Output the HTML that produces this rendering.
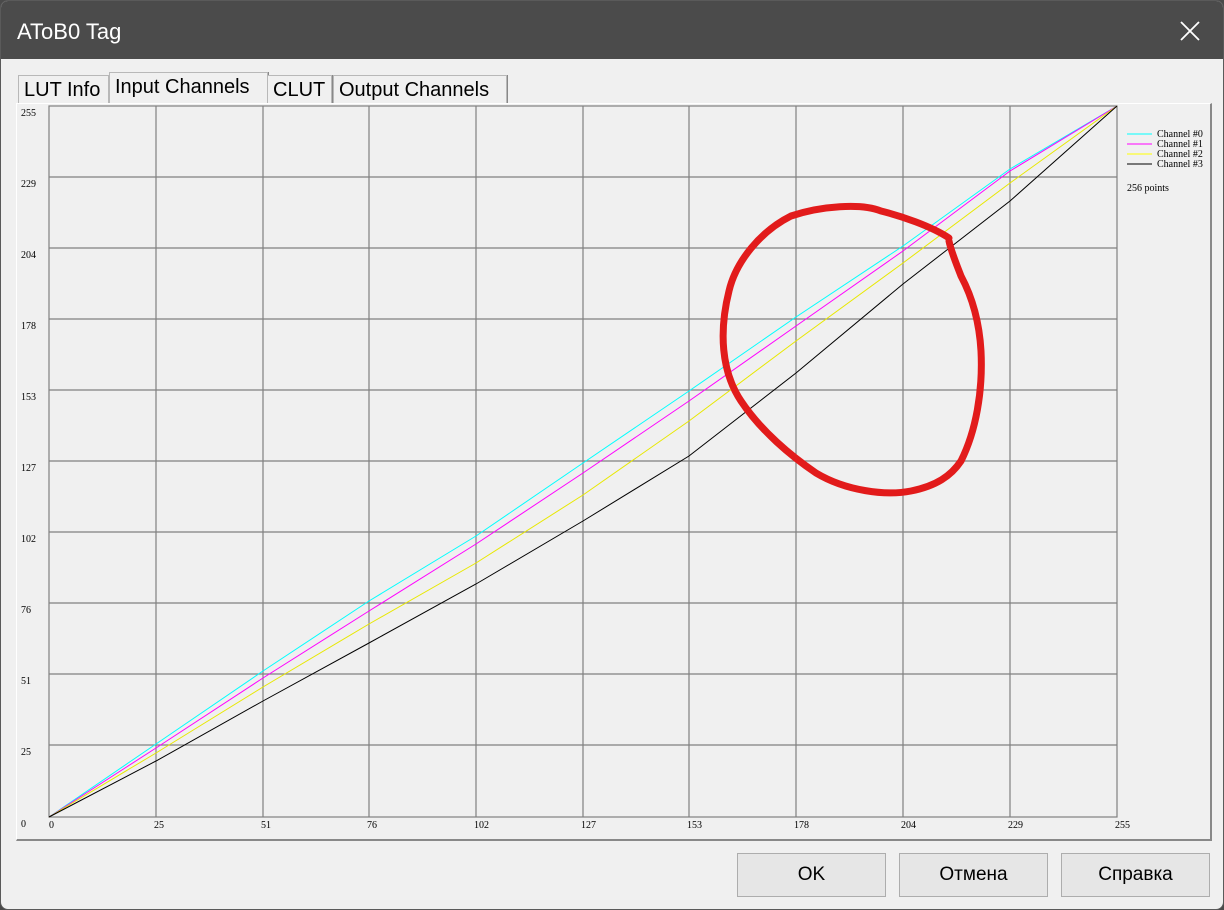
<!DOCTYPE html>
<html><head><style>
body{margin:0;width:1224px;height:910px;background:#4a4a4a;font-family:"Liberation Sans",Arial,sans-serif;overflow:hidden;position:relative}
.win{position:absolute;left:0;top:0;width:1222px;height:908px;border:1px solid #5a5a5a;border-radius:8px;background:#f0f0f0;overflow:hidden}
.title{position:absolute;left:0;top:0;width:100%;height:58px;background:#4b4b4b;color:#fff;font-size:22px}
.title span{position:absolute;left:16px;top:18px}
.tab{position:absolute;top:74px;height:28px;border:1px solid #b8b8b8;border-bottom:none;background:#f0f0f0;font-size:20px;line-height:28px;padding-left:5px;box-shadow:1px 0 0 #888}
.panel{position:absolute;left:15px;top:102px;width:1193px;height:735px;border:1px solid #fff;border-right:2px solid #888;border-bottom:2px solid #888}
.btn{position:absolute;top:852px;width:147px;height:42px;border:1px solid #adadad;background:#e6e6e6;font-size:19px;text-align:center;line-height:42px}
svg text{font-family:"Liberation Serif",serif;font-size:10px}
</style></head><body>
<div class="win">
<div class="title"><span>AToB0 Tag</span>
<svg style="position:absolute;left:1178px;top:19px" width="22" height="22"><path d="M2 2L20 20M20 2L2 20" stroke="#fff" stroke-width="1.8"/></svg></div>
<div class="tab" style="left:17px;width:84px">LUT Info</div>
<div class="tab" style="left:108px;top:71px;height:31px;width:152px;font-size:20px">Input Channels</div>
<div class="tab" style="left:266px;width:58px">CLUT</div>
<div class="tab" style="left:332px;width:167px">Output Channels</div>
<div class="panel"></div>
<svg style="position:absolute;left:0;top:0" width="1224" height="910">
<g stroke="#808080" stroke-width="1.2" fill="none">
<rect x="48" y="105" width="1068" height="711"/>
<path d="M155 105V816M262 105V816M368 105V816M475 105V816M582 105V816M688 105V816M795 105V816M902 105V816M1009 105V816M48 176H1116M48 247H1116M48 318H1116M48 389H1116M48 460H1116M48 531H1116M48 602H1116M48 673H1116M48 744H1116"/>
</g>
<g fill="#000">
<text x="20" y="115">255</text><text x="20" y="186">229</text><text x="20" y="257">204</text><text x="20" y="328">178</text><text x="20" y="399">153</text><text x="20" y="470">127</text><text x="20" y="541">102</text><text x="20" y="612">76</text><text x="20" y="683">51</text><text x="20" y="754">25</text><text x="20" y="826">0</text>
<text x="48" y="827">0</text><text x="153" y="827">25</text><text x="260" y="827">51</text><text x="366" y="827">76</text><text x="473" y="827">102</text><text x="580" y="827">127</text><text x="686" y="827">153</text><text x="793" y="827">178</text><text x="900" y="827">204</text><text x="1007" y="827">229</text><text x="1114" y="827">255</text>
<text x="1156" y="136" font-size="9">Channel #0</text><text x="1156" y="146" font-size="9">Channel #1</text><text x="1156" y="156" font-size="9">Channel #2</text><text x="1156" y="166" font-size="9">Channel #3</text>
<text x="1126" y="190" font-size="9">256 points</text>
</g>
<path d="M1126 133H1151" stroke="#00ffff"/><path d="M1126 143H1151" stroke="#ff00ff"/><path d="M1126 153H1151" stroke="#ffff00"/><path d="M1126 163H1151" stroke="#000"/>
<g fill="none" stroke-width="1">
<polyline stroke="#00ffff" points="48,816 155,743 262,670 368,600 475,535 582,462 688,390 795,316 902,245 1009,168 1116,105"/>
<polyline stroke="#ff00ff" points="48,816 155,747 262,677 368,610 475,543 582,472 688,400 795,325 902,250 1009,170 1116,105"/>
<polyline stroke="#e8e800" points="48,816 155,752 262,686 368,623 475,562 582,494 688,420 795,340 902,262 1009,182 1116,105"/>
<polyline stroke="#000" points="48,816 155,760 262,700 368,642 475,583 582,520 688,455 795,372 902,283 1009,200 1116,105"/>
</g>
<path d="M948 237C930 225 900 215 880 210C860 202 820 205 790 215C760 230 735 260 728 290C718 330 720 370 740 400C760 430 790 455 815 472C845 490 885 495 910 490C935 485 950 475 960 460C975 430 982 390 980 350C978 315 968 290 960 275C955 262 950 250 948 240" fill="none" stroke="#e21b1b" stroke-width="7" stroke-linecap="round"/>
</svg>
<div class="btn" style="left:736px">OK</div>
<div class="btn" style="left:898px">Отмена</div>
<div class="btn" style="left:1060px">Справка</div>
</div>
</body></html>
